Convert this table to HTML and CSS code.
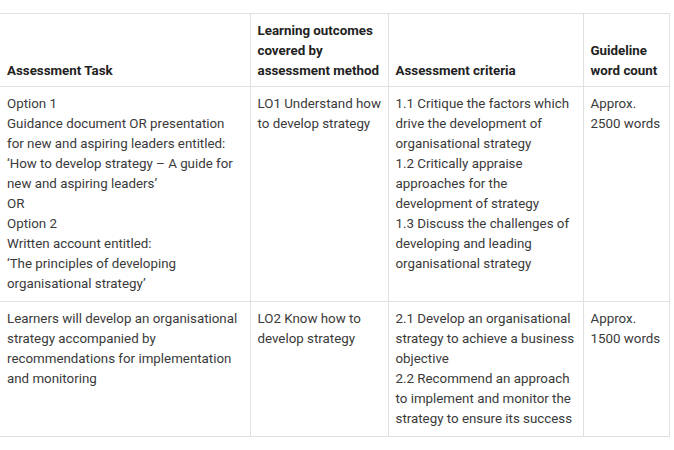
FILE: index.html
```html
<!DOCTYPE html>
<html>
<head>
<meta charset="utf-8">
<link rel="stylesheet" href="styles.css">
</head>
<body>
<table class="grid">
  <colgroup>
    <col class="c1"><col class="c2"><col class="c3"><col class="c4">
  </colgroup>
  <thead>
    <tr>
      <th>Assessment Task</th>
      <th>Learning outcomes covered by assessment method</th>
      <th>Assessment criteria</th>
      <th>Guideline word count</th>
    </tr>
  </thead>
  <tbody>
    <tr>
      <td>Option 1<br>Guidance document OR presentation for new and aspiring leaders entitled:<br>‘How to develop strategy – A guide for new and aspiring leaders’<br>OR<br>Option 2<br>Written account entitled:<br>‘The principles of developing organisational strategy’</td>
      <td>LO1 Understand how to develop strategy</td>
      <td>1.1 Critique the factors which drive the development of organisational strategy<br>1.2 Critically appraise approaches for the development of strategy<br>1.3 Discuss the challenges of developing and leading organisational strategy</td>
      <td>Approx. 2500 words</td>
    </tr>
    <tr>
      <td>Learners will develop an organisational strategy accompanied by recommendations for implementation and monitoring</td>
      <td>LO2 Know how to develop strategy</td>
      <td>2.1 Develop an organisational strategy to achieve a business objective<br>2.2 Recommend an approach to implement and monitor the strategy to ensure its success</td>
      <td>Approx. 1500 words</td>
    </tr>
  </tbody>
</table>
</body>
</html>
```
FILE: styles.css
```css
html, body {
  margin: 0;
  padding: 0;
  background: #fff;
}
body {
  padding-top: 13px;
  font-family: Roboto, "Liberation Sans", sans-serif;
  font-size: 13.33px;
  line-height: 20px;
  color: #3a3a3a;
}
.grid {
  border-collapse: collapse;
  table-layout: fixed;
  width: 669px;
}
.c1 { width: 250px; }
.c2 { width: 138px; }
.c3 { width: 195px; }
.c4 { width: 86px; }
.grid th, .grid td {
  border: 1px solid #e0e0e0;
  padding: 7px 4px 7px 7px;
  text-align: left;
}
.grid th:first-child, .grid td:first-child {
  border-left: none;
  padding-right: 8px;
}
.grid th {
  font-weight: 700;
  vertical-align: bottom;
  color: #222;
  padding-top: 7px;
  padding-bottom: 5px;
}
.grid td {
  vertical-align: top;
}
```
